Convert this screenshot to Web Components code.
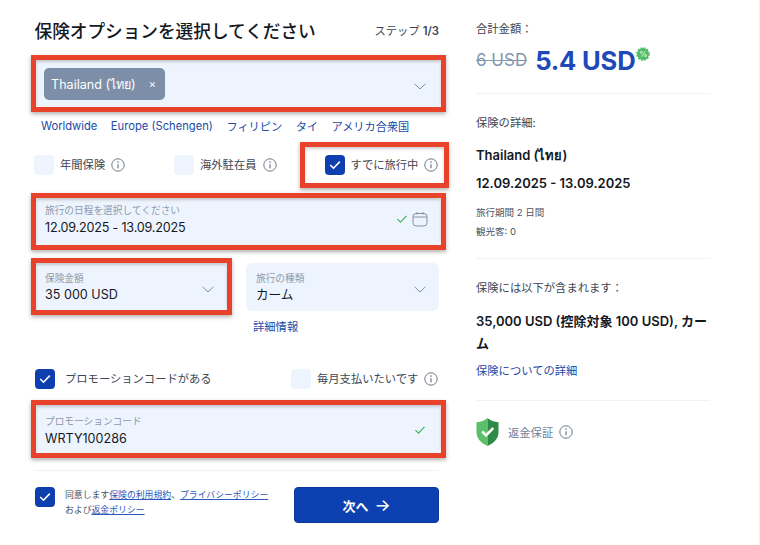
<!DOCTYPE html>
<html lang="ja">
<head>
<meta charset="utf-8">
<title>保険オプション</title>
<style>
  html, body { margin: 0; background: #fff; }
  body {
    font-family: Inter, "Noto Sans CJK JP", "Noto Sans", sans-serif;
    color: #14181f;
  }
</style>
</head>
<body>
<insurance-page></insurance-page>
<script>
const CHEVRON = `<svg width="12" height="7" viewBox="0 0 12 7" fill="none" stroke="#7f8da2" stroke-width="1"><path d="M.6.8L6 6l5.4-5.2"/></svg>`;
const TICK = `<svg width="12" height="10" viewBox="0 0 12 10" fill="none" stroke="#45b163" stroke-width="1.2"><path d="M1.5 5.2l3 3L10.5 1.8"/></svg>`;
const CALENDAR = `<svg width="16" height="16" viewBox="0 0 16 16" fill="none" stroke="#8592a6" stroke-width="1"><rect x="1" y="2.5" width="14" height="12.5" rx="3"/><path d="M1 6h14M5 1v2.5M11 1v2.5"/></svg>`;

// Hand drawn red highlight lying over a form control.
class RedMark extends HTMLElement {
    constructor() {
        super();
        this.attachShadow({mode: 'open'});
        this.shadowRoot.innerHTML = `
        <style>
          :host {
            position: absolute;
            display: block;
            box-sizing: border-box;
            border: 5px solid #e8432a;
            box-shadow: 0 2px 4px rgba(40, 30, 30, .35), inset 0 2px 3px rgba(40, 30, 30, .22);
            pointer-events: none;
          }
        </style>`;
    }
}
customElements.define('red-mark', RedMark);

class InfoIcon extends HTMLElement {
    constructor() {
        super();
        this.attachShadow({mode: 'open'});
        this.shadowRoot.innerHTML = `
        <style>:host { display: inline-flex; flex: none; }</style>
        <svg width="14" height="14" viewBox="0 0 14 14" fill="none" stroke="#6e7887" stroke-width="1">
          <circle cx="7" cy="7" r="6.2"/>
          <path d="M7 6.2v4" stroke-width="1.2"/>
          <circle cx="7" cy="4.1" r=".8" fill="#6e7887" stroke="none"/>
        </svg>`;
    }
}
customElements.define('info-icon', InfoIcon);

class CheckBox extends HTMLElement {
    constructor() {
        super();
        const size = this.getAttribute('size') || 20;
        this.attachShadow({mode: 'open'});
        this.shadowRoot.innerHTML = `
        <style>
          :host {
            display: inline-flex; flex: none; align-items: center; justify-content: center;
            width: ${size}px; height: ${size}px; border-radius: 4px; background: #eef4fd;
          }
          :host([checked]) { background: #0e3fae; }
          svg { display: none; }
          :host([checked]) svg { display: block; }
        </style>
        <svg width="12" height="10" viewBox="0 0 12 10" fill="none" stroke="#fff" stroke-width="1.6"><path d="M1.2 5l3.3 3.2L10.8 1.6"/></svg>`;
    }
}
customElements.define('check-box', CheckBox);

class CheckItem extends HTMLElement {
    constructor() {
        super();
        this.attachShadow({mode: 'open'});
        const on = this.hasAttribute('checked') ? 'checked' : '';
        this.shadowRoot.innerHTML = `
        <style>
          :host { display: flex; align-items: center; gap: var(--label-gap, 6px); height: 21px; position: relative;
                  font-size: 11.3px; color: #3d4654; white-space: nowrap; }
          span { padding-bottom: 2px; }
        </style>
        <check-box ${on}></check-box>
        <span><slot></slot></span>
        ${this.hasAttribute('info') ? '<info-icon></info-icon>' : ''}
        <slot name="mark"></slot>`;
    }
}
customElements.define('check-item', CheckItem);

// Blue input box with optional small label above its value.
class FormField extends HTMLElement {
    constructor() {
        super();
        this.attachShadow({mode: 'open'});
        const label = this.getAttribute('label');
        this.shadowRoot.innerHTML = `
        <style>
          :host {
            display: flex; align-items: center; justify-content: space-between; position: relative;
            box-sizing: border-box; height: var(--h, 48px); padding: 0 var(--pad-r, 13px) 0 11px;
            background: #eef4fd; border-radius: 6px;
          }
          .txt { display: flex; flex-direction: column; gap: var(--gap, 1px); padding: var(--txt-t, 1px) 0 var(--txt-b, 0); }
          .lab { font-size: 9.7px; line-height: 12px; color: #8c99ac; white-space: nowrap; }
          .val { font-size: 12.6px; line-height: 17px; color: #14181f; white-space: nowrap; letter-spacing: var(--track, 0); }
          .end { display: flex; align-items: center; margin-bottom: var(--end-up, 0); }
        </style>
        <div class="txt">
          ${label ? `<div class="lab">${label}</div>` : ''}
          <div class="val"><slot></slot></div>
        </div>
        <div class="end"><slot name="end"></slot></div>
        <slot name="mark"></slot>`;
    }
}
customElements.define('form-field', FormField);

class CountryChip extends HTMLElement {
    constructor() {
        super();
        this.attachShadow({mode: 'open'});
        this.shadowRoot.innerHTML = `
        <style>
          :host {
            display: inline-flex; align-items: center; justify-content: space-between; box-sizing: border-box;
            width: 121px; height: 32px; padding: 0 9px 0 7px; border-radius: 5px;
            background: #7d8ea8; color: #fff; font-size: 12.6px;
          }
          i { font-style: normal; font-size: 11px; }
        </style>
        <span><slot></slot></span><i>×</i>`;
    }
}
customElements.define('country-chip', CountryChip);

class FormPanel extends HTMLElement {
    constructor() {
        super();
        this.attachShadow({mode: 'open'});
        this.shadowRoot.innerHTML = `
        <style>
          :host { display: flex; flex-direction: column; width: 405px; flex: none; }
          a { color: #1c4aa6; text-decoration: none; }
          header { display: flex; justify-content: space-between; align-items: center; height: 24px; margin-top: 18px; }
          h1 { margin: 0 0 0 .5px; font-size: 17.65px; font-weight: 500; color: #14181f; white-space: nowrap; }
          .step { font-size: 11.3px; color: #3d4654; }
          .step b { font-weight: 600; }
          .wide { margin-right: -2px; --pad-r: 15px; }
          .country { margin-top: 18px; --h: 47px; padding-left: 10px; }
          .links { display: flex; gap: 13.5px; height: 18px; align-items: center; margin: 10px 0 0 7px;
                   font-size: 11.2px; white-space: nowrap; }
          .checks { display: grid; grid-template-columns: 140px 151px 114px; margin-top: 19px; }
          .date { margin-top: 23px; --h: 47px; --end-up: 5px; --pad-r: 13px; --gap: 2px; --txt-t: 0; --txt-b: 2px; --track: -.2px; }
          .pair { display: grid; grid-template-columns: 193px 193px; gap: 19px; margin-top: 18px; }
          .more { height: 16px; margin: 8px 0 0 219px; font-size: 11.3px; line-height: 16px; }
          .promo { display: grid; grid-template-columns: 257px 148px; margin-top: 33px; }
          .promo check-item:first-child { --label-gap: 10px; margin-left: 1px; }
          .code { margin-top: 16px; --gap: 2px; --txt-t: 4px; }
          hr { width: 100%; height: 1px; margin: 17px 0 0; border: 0; background: #f0f2f6; }
          .foot { display: flex; justify-content: space-between; height: 36px; margin-top: 16px; }
          .terms { display: flex; gap: 10px; margin-left: 1px; }
          .terms p { margin: 0; font-size: 8.85px; line-height: 15px; color: #4a5360; white-space: nowrap; }
          .terms a { text-decoration: underline; color: #2a57b8; }
          button {
            width: 145px; height: 36px; border: 1px solid #0a3799; border-radius: 4px; background: #0d40b0;
            color: #fff; font: 600 13px Inter, "Noto Sans CJK JP", sans-serif;
          }
          button span { margin-left: 6px; font-size: 17px; font-weight: 500; }
        </style>
        <header>
          <h1>保険オプションを選択してください</h1>
          <span class="step">ステップ <b>1/3</b></span>
        </header>

        <form-field class="country wide">
          <country-chip>Thailand (ไทย)</country-chip>
          <span slot="end">${CHEVRON}</span>
          <red-mark slot="mark" style="left:-3px;right:-5px;top:-5px;bottom:-5px"></red-mark>
        </form-field>

        <nav class="links">
          <a>Worldwide</a><a>Europe (Schengen)</a><a>フィリピン</a><a>タイ</a><a>アメリカ合衆国</a>
        </nav>

        <div class="checks">
          <check-item info>年間保険</check-item>
          <check-item info>海外駐在員</check-item>
          <check-item checked info style="--label-gap:5.5px">すでに旅行中
            <red-mark slot="mark" style="left:-25px;right:-10px;top:-12px;bottom:-13px"></red-mark>
          </check-item>
        </div>

        <form-field class="date wide" label="旅行の日程を選択してください">
          12.09.2025 - 13.09.2025
          <span slot="end" style="display:flex;align-items:center;gap:4px">${TICK}${CALENDAR}</span>
          <red-mark slot="mark" style="left:-3px;right:-5px;top:-5px;bottom:-5px"></red-mark>
        </form-field>

        <div class="pair">
          <form-field label="保険金額">
            35 000 USD
            <span slot="end">${CHEVRON}</span>
            <red-mark slot="mark" style="left:-3px;right:-5px;top:-5px;bottom:-4px"></red-mark>
          </form-field>
          <form-field label="旅行の種類" style="padding-left:10px">
            カーム
            <span slot="end">${CHEVRON}</span>
          </form-field>
        </div>
        <a class="more">詳細情報</a>

        <div class="promo">
          <check-item checked>プロモーションコードがある</check-item>
          <check-item info>毎月支払いたいです</check-item>
        </div>

        <form-field class="code wide" label="プロモーションコード">
          WRTY100286
          <span slot="end">${TICK}</span>
          <red-mark slot="mark" style="left:-3px;right:-5px;top:-5px;bottom:-5px"></red-mark>
        </form-field>

        <hr>

        <div class="foot">
          <div class="terms">
            <check-box checked></check-box>
            <p>同意します<a>保険の利用規約</a>、<a>プライバシーポリシー</a><br>および<a>返金ポリシー</a></p>
          </div>
          <button type="button">次へ<span>→</span></button>
        </div>`;
    }
}
customElements.define('form-panel', FormPanel);

class SummaryPanel extends HTMLElement {
    constructor() {
        super();
        this.attachShadow({mode: 'open'});
        this.shadowRoot.innerHTML = `
        <style>
          :host { display: flex; flex-direction: column; width: 234px; flex: none; margin-left: 37px;
                  font-size: 11.3px; color: #3d4654; }
          p { margin: 0; }
          hr { width: 100%; height: 1px; margin: 0; border: 0; background: #f0f2f6; flex: none; }
          .total { margin-top: 21px; line-height: 16px; }
          .prices { display: flex; align-items: center; height: 32px; margin-top: 7px; position: relative; }
          .old { font-size: 17px; color: #8496ae; text-decoration: line-through; }
          .new { margin-left: 8px; font-size: 25.6px; font-weight: 700; color: #1f49b9; letter-spacing: -.2px; }
          .badge { position: relative; display: flex; width: 14px; height: 14px; margin: -13px 0 0 1px; }
          .badge span { position: absolute; inset: 0; text-align: center; color: #d8f2de; font-size: 8px; line-height: 14px; font-weight: 700; }
          .head { line-height: 16px; }
          strong { display: block; font-size: 13px; font-weight: 600; color: #14181f; white-space: nowrap; }
          small { display: block; font-size: 9.5px; line-height: 14px; color: #4a5360; }
          a { color: #1c4aa6; }
          .guarantee { display: flex; align-items: center; margin-top: 16px; height: 30px; color: #6f8098; }
          .guarantee span { margin: 0 6px 0 9px; }
        </style>
        <p class="total">合計金額：</p>
        <div class="prices">
          <span class="old">6 USD</span><span class="new">5.4 USD</span>
          <span class="badge">
            <svg width="14" height="14" viewBox="0 0 14 14"><circle cx="7" cy="7" r="5.9" fill="#4fbb68"/><circle cx="7" cy="7" r="6.2" fill="none" stroke="#4fbb68" stroke-width="1.4" stroke-dasharray="1.8 1.45"/></svg>
            <span>%</span>
          </span>
        </div>
        <hr style="margin-top:17px">
        <p class="head" style="margin-top:21px">保険の詳細:</p>
        <strong style="margin-top:16px;line-height:16px">Thailand (ไทย)</strong>
        <strong style="margin-top:12px;line-height:16px">12.09.2025 - 13.09.2025</strong>
        <small style="margin-top:15px">旅行期間 2 日間</small>
        <small style="margin-top:5px">観光客: 0</small>
        <hr style="margin-top:19px">
        <p class="head" style="margin-top:21px">保険には以下が含まれます：</p>
        <strong style="margin-top:14px;line-height:22px;white-space:normal">35,000 USD (控除対象 100 USD), カーム</strong>
        <a style="margin-top:9px;line-height:16px">保険についての詳細</a>
        <hr style="margin-top:21px">
        <div class="guarantee">
          <svg width="23" height="28" viewBox="0 0 24 28" preserveAspectRatio="none">
            <path d="M12 0C9 2.6 5 4 .5 4.2V14c0 6.4 4.6 11 11.5 14z" fill="#5cbf6b"/>
            <path d="M12 0c3 2.6 7 4 11.5 4.2V14c0 6.4-4.6 11-11.5 14z" fill="#2f8a46"/>
            <path d="M6.5 13.5l4 4 7.5-7.5" fill="none" stroke="#fff" stroke-width="2.6"/>
          </svg>
          <span>返金保証</span><info-icon></info-icon>
        </div>`;
    }
}
customElements.define('summary-panel', SummaryPanel);

class InsurancePage extends HTMLElement {
    constructor() {
        super();
        this.attachShadow({mode: 'open'});
        this.shadowRoot.innerHTML = `
        <style>
          :host {
            display: flex; box-sizing: border-box; width: 760px; height: 545px; padding-left: 34px;
            overflow: hidden; border-right: 1px solid #eff2fb;
          }
        </style>
        <form-panel></form-panel>
        <summary-panel></summary-panel>`;
    }
}
customElements.define('insurance-page', InsurancePage);
</script>
</body>
</html>
